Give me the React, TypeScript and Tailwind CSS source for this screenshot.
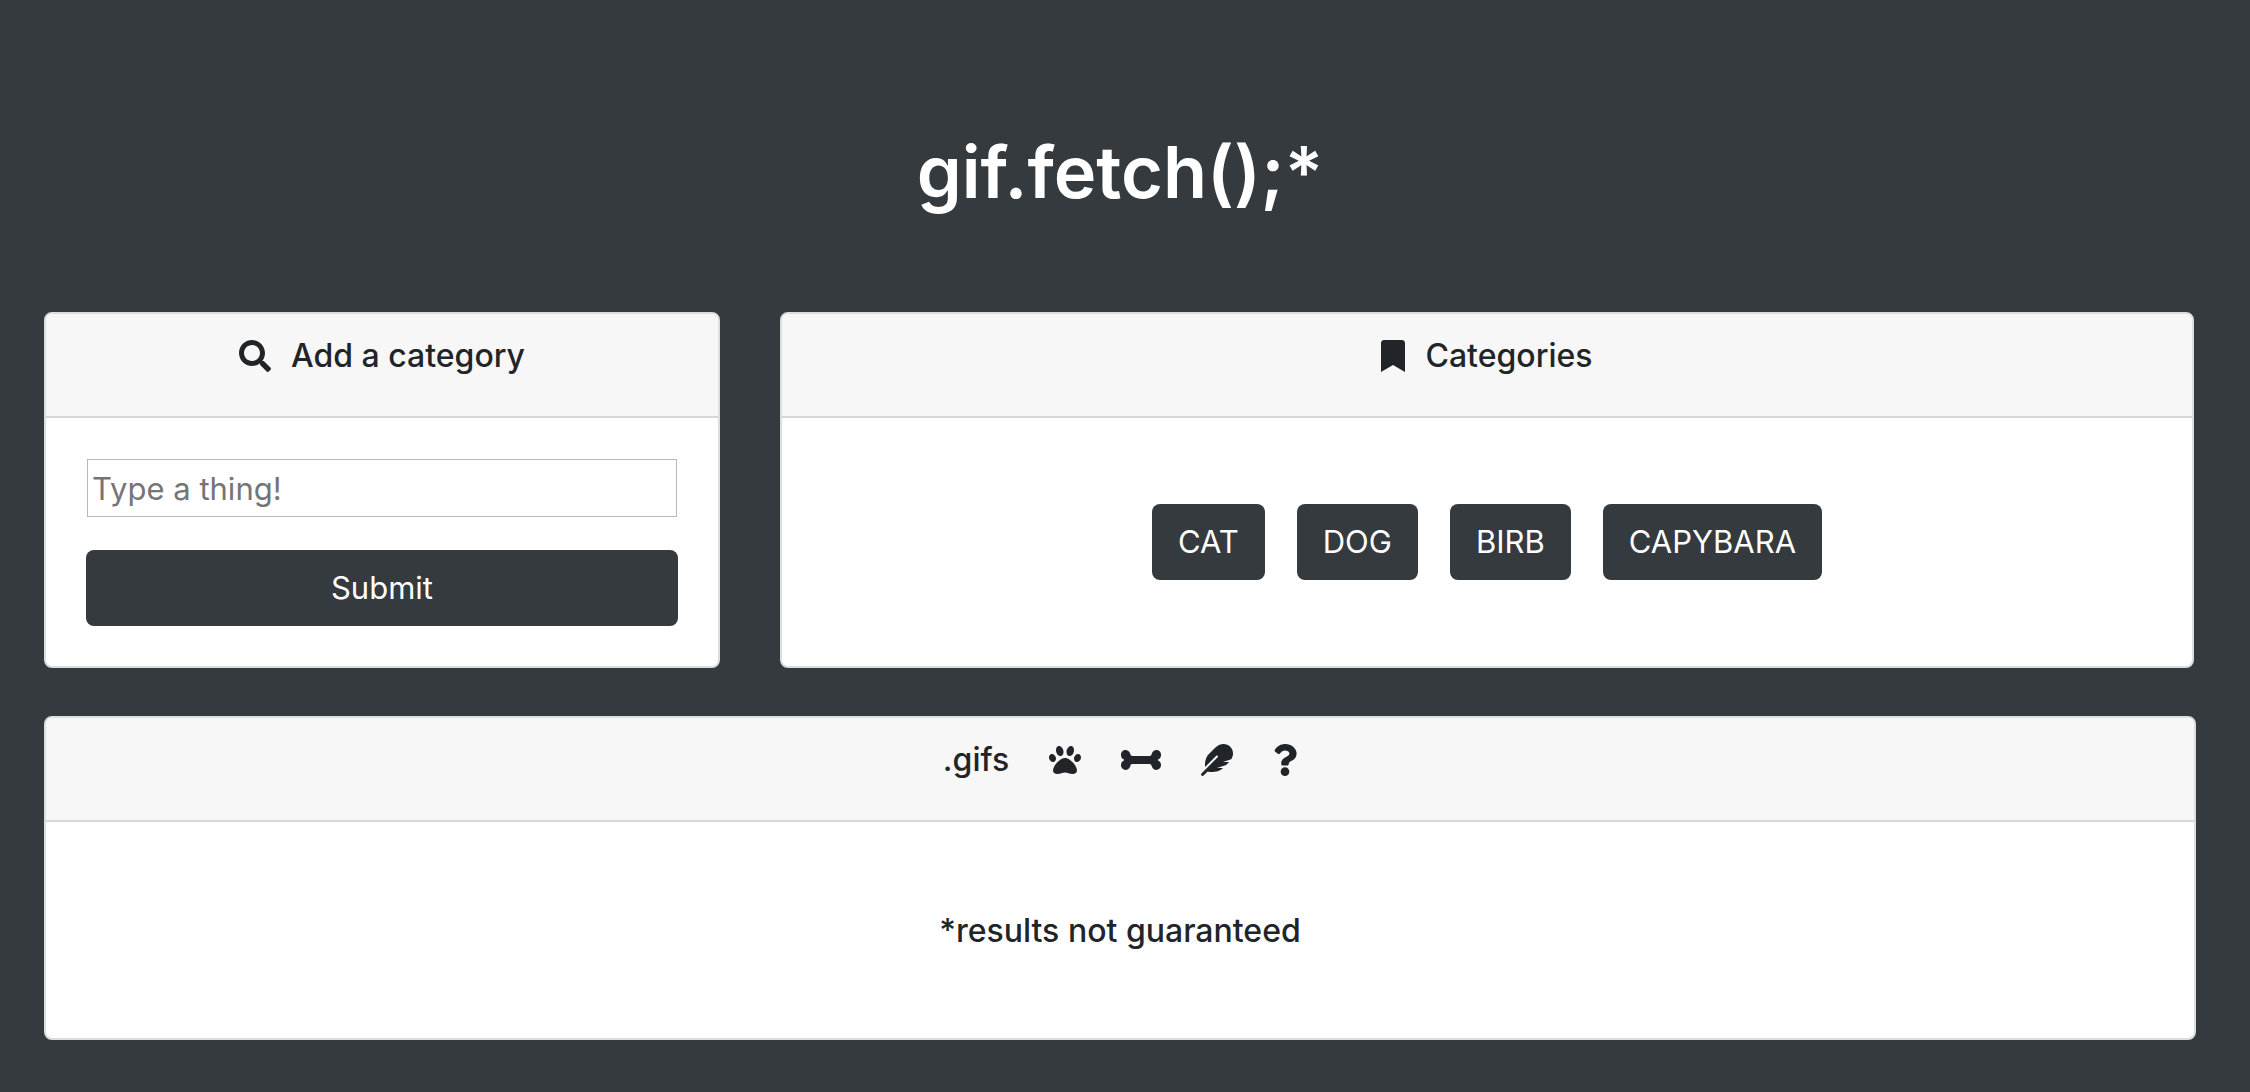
import React from "react";
import { FaBone, FaBookmark, FaFeather, FaPaw, FaQuestion, FaSearch } from "react-icons/fa";

const categories = ["CAT", "DOG", "BIRB", "CAPYBARA"];

function Card({ header, children }: { header: React.ReactNode; children: React.ReactNode }) {
  return (
    <section className="flex flex-col rounded-lg border-2 border-[#dcdddd] bg-white">
      <header className="flex items-start justify-center rounded-t-md border-b-2 border-[#d8d8d8] bg-[#f7f7f7] px-10 pt-6 pb-[42px] text-[32px] leading-9">
        {header}
      </header>
      {children}
    </section>
  );
}

export default function App() {
  return (
    <main className="min-h-screen bg-[#353a3e] pr-[54px] pl-11 pb-[52px] font-['Inter',sans-serif] text-[31px] leading-[38px] text-[#212529]">
      <h1 className="pt-[124px] pb-[92px] text-center text-[72px] leading-24 font-semibold text-white">
        gif.fetch();*
      </h1>

      <div className="mr-0.5 grid grid-cols-[676fr_1414fr] gap-[60px]">
        <Card
          header={
            <h2 className="flex items-center gap-5 font-medium">
              <FaSearch className="size-8" aria-hidden="true" />
              <label htmlFor="category">Add a category</label>
            </h2>
          }
        >
          <form className="flex flex-col gap-8 p-10" onSubmit={(e) => e.preventDefault()}>
            <input
              id="category"
              type="text"
              placeholder="Type a thing!"
              className="m-px h-[58px] min-w-0 border border-[#b9b9b9] px-1 placeholder:text-[#757575]"
            />
            <button type="submit" className="h-19 rounded-lg bg-[#353a3e] text-white">
              Submit
            </button>
          </form>
        </Card>

        <Card
          header={
            <h2 className="flex items-center gap-5 font-medium">
              <FaBookmark className="h-8 w-6" aria-hidden="true" />
              Categories
            </h2>
          }
        >
          <div className="flex grow flex-wrap items-center justify-center gap-8 p-10">
            {categories.map((name) => (
              <button key={name} type="button" className="h-19 rounded-lg bg-[#353a3e] px-[26px] text-white">
                {name}
              </button>
            ))}
          </div>
        </Card>
      </div>

      <div className="mt-12">
        <Card
          header={
            <h2 className="flex items-center gap-10 font-medium">
              .gifs
              <FaPaw className="size-8" aria-hidden="true" />
              <FaBone className="h-8 w-10" aria-hidden="true" />
              <FaFeather className="size-8" aria-hidden="true" />
              <FaQuestion className="h-8 w-6" aria-hidden="true" />
            </h2>
          }
        >
          <p className="px-10 pt-[90px] pb-[88px] text-center text-[32px] leading-[38px] font-medium">
            *results not guaranteed
          </p>
        </Card>
      </div>
    </main>
  );
}
